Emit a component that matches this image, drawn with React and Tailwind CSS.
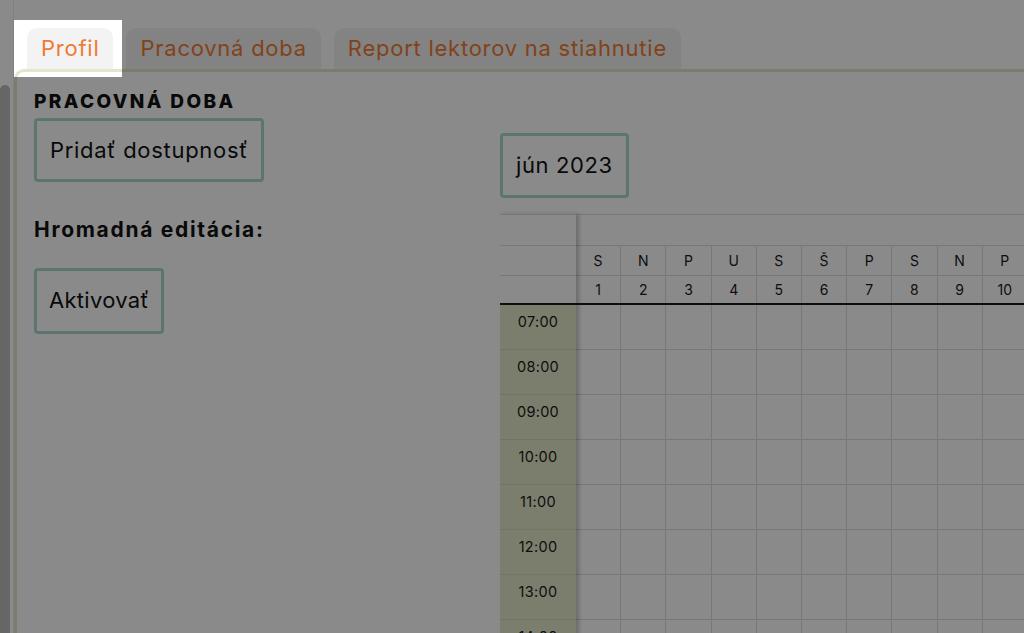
const tabs = ["Profil", "Pracovná doba", "Report lektorov na stiahnutie"];
const days = [
  ["S", 1], ["N", 2], ["P", 3], ["U", 4], ["S", 5], ["Š", 6],
  ["P", 7], ["S", 8], ["N", 9], ["P", 10], ["U", 11], ["S", 12],
];
const hours = ["07:00", "08:00", "09:00", "10:00", "11:00", "12:00", "13:00", "14:00"];

function Calendar() {
  return (
    <div className="flex mt-[16px] text-[14px] text-[#1a1a1a] font-['Inter',sans-serif]">
      {/* sticky time column */}
      <div className="w-[76px] shrink-0 flex flex-col relative z-10 bg-white shadow-[3px_0_4px_rgba(0,0,0,0.22)]">
        <div className="h-[31px] border-t border-[#dcdcdc]" />
        <div className="h-[30px] border-t border-[#dcdcdc]" />
        <div className="h-[30px] border-t border-[#dcdcdc] border-b-2 border-b-[#1a1a1a]" />
        {hours.map((h) => (
          <div key={h} className="h-[45px] shrink-0 bg-[#e4e9c8] border-b border-[#d3d7bb] text-center pt-[6px] text-[14.5px] tracking-[0.3px]">
            {h}
          </div>
        ))}
      </div>
      <div className="flex flex-col">
        <div className="h-[31px] border-t border-[#dcdcdc] w-[560px]" />
        <div className="flex h-[30px]">
          {days.map(([d, n]) => (
            <div key={n} className="w-[45.2px] shrink-0 border-t border-r border-[#dcdcdc] flex items-center justify-center">
              {d}
            </div>
          ))}
        </div>
        <div className="flex h-[30px] border-b-2 border-[#1a1a1a]">
          {days.map(([d, n]) => (
            <div key={n} className="w-[45.2px] shrink-0 border-t border-r border-[#dcdcdc] flex items-center justify-center">
              {n}
            </div>
          ))}
        </div>
        {hours.map((h) => (
          <div key={h} className="flex h-[45px] shrink-0">
            {days.map(([d, n]) => (
              <div key={n} className="w-[45.2px] shrink-0 border-r border-b border-[#dcdcdc]" />
            ))}
          </div>
        ))}
      </div>
    </div>
  );
}

export default function App() {
  return (
    <div className="relative w-[1024px] h-[633px] overflow-hidden bg-white flex font-['Inter',sans-serif]">
      {/* left gutter with scrollbar */}
      <div className="w-[14px] shrink-0 border-r border-[#ececec]">
        <div className="mt-[85px] w-[10px] h-[600px] rounded-t-[5px] bg-[#bcbcbc]" />
      </div>

      <div className="flex-1 flex flex-col pt-[28px]">
        {/* tabs */}
        <div className="flex gap-[13px] pl-[13px]">
          {tabs.map((t) => (
            <div
              key={t}
              className="h-[41px] px-[14px] rounded-t-[10px] bg-[#f3f3f3] text-[#f07a32] text-[22px] tracking-[0.75px] flex items-center"
            >
              {t}
            </div>
          ))}
        </div>

        {/* panel */}
        <div className="flex-1 border-t-[3px] border-l-[3px] border-[#e2e7cc] rounded-tl-[10px] flex pl-[17px] pt-[18px]">
          <div className="w-[466px] shrink-0 flex flex-col items-start">
            <h2 className="text-[19px] font-extrabold text-[#111] tracking-[2.4px] leading-[24px]">
              PRACOVNÁ DOBA
            </h2>
            <button className="mt-[4px] h-[64px] px-[13px] border-[3px] border-[#a9d9cf] rounded-[4px] text-[22px] tracking-[0.7px] text-[#111]">
              Pridať dostupnosť
            </button>
            <div className="mt-[32px] text-[21px] font-bold text-[#111] tracking-[1.7px]">
              Hromadná editácia:
            </div>
            <button className="mt-[22px] h-[66px] px-[12px] border-[3px] border-[#a9d9cf] rounded-[4px] text-[22px] tracking-[0.3px] text-[#111]">
              Aktivovať
            </button>
          </div>

          <div className="flex flex-col pt-[43px]">
            <button className="self-start h-[65px] px-[13px] border-[3px] border-[#a9d9cf] rounded-[4px] text-[22px] tracking-[0.6px] text-[#111]">
              jún 2023
            </button>
            <Calendar />
          </div>
        </div>
      </div>

      {/* tour spotlight overlay */}
      <div className="absolute left-[14px] top-[20px] w-[108px] h-[57px] pointer-events-none z-50 shadow-[0_0_0_2000px_rgba(0,0,0,0.46)]" />
    </div>
  );
}
